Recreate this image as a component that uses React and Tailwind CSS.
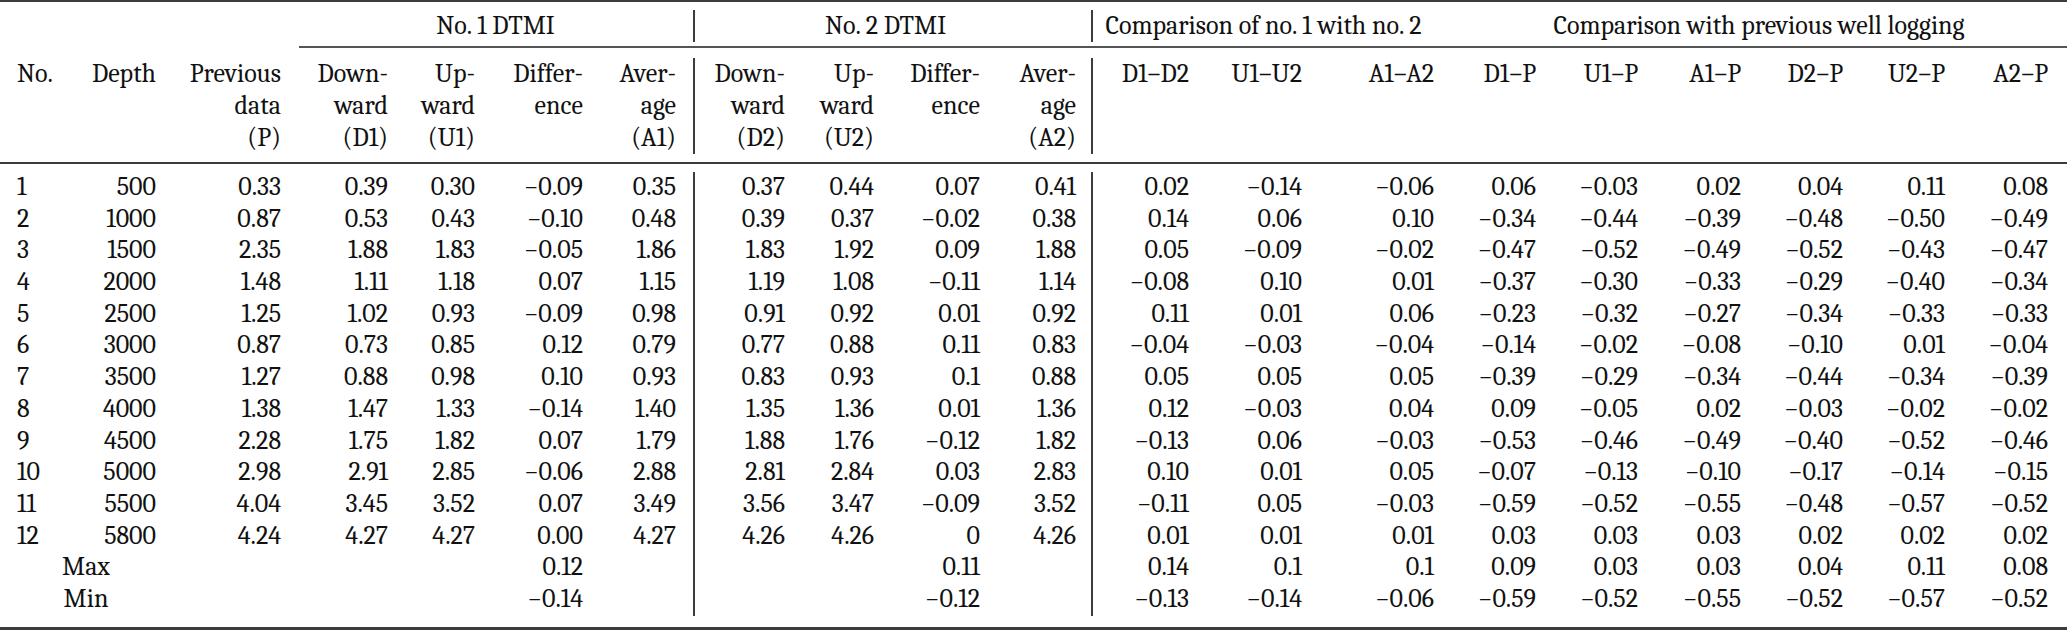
const GRID =
  "grid grid-cols-[50px_106px_125px_107px_87px_108px_93px_17px_2px_90px_89px_106px_96px_15px_2px_96px_113px_132px_102px_102px_103px_102px_102px_103px_19px]";

const M = "\u2212";

const rows = [
  ["1", "500", "0.33", "0.39", "0.30", M + "0.09", "0.35", "0.37", "0.44", "0.07", "0.41", "0.02", M + "0.14", M + "0.06", "0.06", M + "0.03", "0.02", "0.04", "0.11", "0.08"],
  ["2", "1000", "0.87", "0.53", "0.43", M + "0.10", "0.48", "0.39", "0.37", M + "0.02", "0.38", "0.14", "0.06", "0.10", M + "0.34", M + "0.44", M + "0.39", M + "0.48", M + "0.50", M + "0.49"],
  ["3", "1500", "2.35", "1.88", "1.83", M + "0.05", "1.86", "1.83", "1.92", "0.09", "1.88", "0.05", M + "0.09", M + "0.02", M + "0.47", M + "0.52", M + "0.49", M + "0.52", M + "0.43", M + "0.47"],
  ["4", "2000", "1.48", "1.11", "1.18", "0.07", "1.15", "1.19", "1.08", M + "0.11", "1.14", M + "0.08", "0.10", "0.01", M + "0.37", M + "0.30", M + "0.33", M + "0.29", M + "0.40", M + "0.34"],
  ["5", "2500", "1.25", "1.02", "0.93", M + "0.09", "0.98", "0.91", "0.92", "0.01", "0.92", "0.11", "0.01", "0.06", M + "0.23", M + "0.32", M + "0.27", M + "0.34", M + "0.33", M + "0.33"],
  ["6", "3000", "0.87", "0.73", "0.85", "0.12", "0.79", "0.77", "0.88", "0.11", "0.83", M + "0.04", M + "0.03", M + "0.04", M + "0.14", M + "0.02", M + "0.08", M + "0.10", "0.01", M + "0.04"],
  ["7", "3500", "1.27", "0.88", "0.98", "0.10", "0.93", "0.83", "0.93", "0.1", "0.88", "0.05", "0.05", "0.05", M + "0.39", M + "0.29", M + "0.34", M + "0.44", M + "0.34", M + "0.39"],
  ["8", "4000", "1.38", "1.47", "1.33", M + "0.14", "1.40", "1.35", "1.36", "0.01", "1.36", "0.12", M + "0.03", "0.04", "0.09", M + "0.05", "0.02", M + "0.03", M + "0.02", M + "0.02"],
  ["9", "4500", "2.28", "1.75", "1.82", "0.07", "1.79", "1.88", "1.76", M + "0.12", "1.82", M + "0.13", "0.06", M + "0.03", M + "0.53", M + "0.46", M + "0.49", M + "0.40", M + "0.52", M + "0.46"],
  ["10", "5000", "2.98", "2.91", "2.85", M + "0.06", "2.88", "2.81", "2.84", "0.03", "2.83", "0.10", "0.01", "0.05", M + "0.07", M + "0.13", M + "0.10", M + "0.17", M + "0.14", M + "0.15"],
  ["11", "5500", "4.04", "3.45", "3.52", "0.07", "3.49", "3.56", "3.47", M + "0.09", "3.52", M + "0.11", "0.05", M + "0.03", M + "0.59", M + "0.52", M + "0.55", M + "0.48", M + "0.57", M + "0.52"],
  ["12", "5800", "4.24", "4.27", "4.27", "0.00", "4.27", "4.26", "4.26", "0", "4.26", "0.01", "0.01", "0.01", "0.03", "0.03", "0.03", "0.02", "0.02", "0.02"],
];

const summary = [
  ["Max", "0.12", "0.11", "0.14", "0.1", "0.1", "0.09", "0.03", "0.03", "0.04", "0.11", "0.08"],
  ["Min", M + "0.14", M + "0.12", M + "0.13", M + "0.14", M + "0.06", M + "0.59", M + "0.52", M + "0.55", M + "0.52", M + "0.57", M + "0.52"],
];

const Sep = () => <div className="bg-[#3c3c3c]" />;

// one body line: c0..c19, with gap + separator columns in between
const Line = ({ v }) => (
  <>
    <div className="pl-[17px]">{v[0]}</div>
    {v.slice(1, 7).map((x, i) => (
      <div key={"a" + i} className="text-right">{x}</div>
    ))}
    <div />
    <Sep />
    {v.slice(7, 11).map((x, i) => (
      <div key={"b" + i} className="text-right">{x}</div>
    ))}
    <div />
    <Sep />
    {v.slice(11).map((x, i) => (
      <div key={"c" + i} className="text-right">{x}</div>
    ))}
    <div />
  </>
);

const SummaryLine = ({ s }) => (
  <>
    <div className="col-span-2 pl-[16px] text-center">{s[0]}</div>
    <div />
    <div />
    <div />
    <div className="text-right">{s[1]}</div>
    <div />
    <div />
    <Sep />
    <div />
    <div />
    <div className="text-right">{s[2]}</div>
    <div />
    <div />
    <Sep />
    {s.slice(3).map((x, i) => (
      <div key={i} className="text-right">{x}</div>
    ))}
    <div />
  </>
);

const H = ({ children }) => <div className="text-right">{children}</div>;

export default function App() {
  return (
    <div className="w-[2067px] h-[632px] bg-white text-[#111] font-serif [font-family:Liberation_Serif,Times_New_Roman,serif] text-[26px] leading-[32px]">
      <div className="h-[2px] bg-[#3c3c3c]" />

      {/* group headings */}
      <div className={GRID + " pt-[8px] pb-[4px]"}>
        <div className="col-start-4 col-end-9 pl-[17px] text-center">No. 1 DTMI</div>
        <div className="col-start-9 bg-[#3c3c3c]" />
        <div className="col-start-10 col-end-14 text-center">No. 2 DTMI</div>
        <div className="col-start-15 bg-[#3c3c3c]" />
        <div className="col-start-16 col-end-19 text-center">Comparison of no. 1 with no. 2</div>
        <div className="col-start-19 col-end-26 pl-[17px] text-center">Comparison with previous well logging</div>
      </div>
      <div className="ml-[299px] h-[2px] bg-[#555]" />

      {/* column headings */}
      <div className={GRID + " pt-[10px] pb-[8px]"}>
        <div className="pl-[17px]">No.</div>
        <H>Depth</H>
        <H>Previous<br />data<br />(P)</H>
        <H>Down-<br />ward<br />(D1)</H>
        <H>Up-<br />ward<br />(U1)</H>
        <H>Differ-<br />ence</H>
        <H>Aver-<br />age<br />(A1)</H>
        <div />
        <Sep />
        <H>Down-<br />ward<br />(D2)</H>
        <H>Up-<br />ward<br />(U2)</H>
        <H>Differ-<br />ence</H>
        <H>Aver-<br />age<br />(A2)</H>
        <div />
        <Sep />
        <H>D1–D2</H>
        <H>U1–U2</H>
        <H>A1–A2</H>
        <H>D1–P</H>
        <H>U1–P</H>
        <H>A1–P</H>
        <H>D2–P</H>
        <H>U2–P</H>
        <H>A2–P</H>
        <div />
      </div>
      <div className="h-[2px] bg-[#3c3c3c]" />

      {/* body */}
      <div className={GRID + " pt-[8px] pb-[11px] auto-rows-[31.7px] leading-[31.7px]"}>
        {rows.map((r) => (
          <Line key={r[0]} v={r} />
        ))}
        {summary.map((s) => (
          <SummaryLine key={s[0]} s={s} />
        ))}
      </div>
      <div className="h-[3px] bg-[#3c3c3c]" />
    </div>
  );
}
